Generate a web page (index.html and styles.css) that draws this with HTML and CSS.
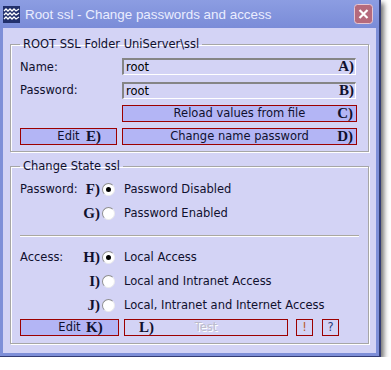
FILE: index.html
```html
<!DOCTYPE html>
<html lang="en">
<head>
  <meta charset="UTF-8" />
  <title>Root ssl - Change passwords and access</title>
  <link rel="stylesheet" href="styles.css">
</head>
<body>
  <div class="window">
    <div class="titlebar">
      <svg class="app-icon" width="17" height="17" viewBox="0 0 17 17">
        <rect x="0" y="0" width="17" height="17" fill="#22306c"/>
        <polyline points="1,5 3,3 5,5 7,3 9,5 11,3 13,5 16,3" fill="none" stroke="#fff" stroke-width="1.3"/>
        <polyline points="1,9 3,7 5,9 7,7 9,9 11,7 13,9 16,7" fill="none" stroke="#fff" stroke-width="1.3"/>
        <polyline points="1,13 3,11 5,13 7,11 9,13 11,11 13,13 16,11" fill="none" stroke="#fff" stroke-width="1.3"/>
      </svg>
      <span class="title">Root ssl - Change passwords and access</span>
      <span class="close">
        <svg width="19" height="20" viewBox="0 0 19 20">
          <rect x="0.5" y="0.5" width="18" height="19" rx="3" fill="#b56a7c" stroke="#e6c6d2"/>
          <path d="M5.5 6 L13.5 14 M13.5 6 L5.5 14" stroke="#fff" stroke-width="2.2"/>
        </svg>
      </span>
    </div>
    <div class="client">
      <fieldset class="group folder">
        <legend>ROOT SSL Folder UniServer\ssl</legend>
        <div class="form-grid">
          <label>Name:</label>
          <div class="field"><input type="text" value="root"><span class="tag tag-r">A)</span></div>
          <label>Password:</label>
          <div class="field"><input type="text" value="root"><span class="tag tag-r">B)</span></div>
          <span></span>
          <button class="btn">Reload values from file<span class="tag tag-r">C)</span></button>
          <button class="btn">Edit<span class="tag tag-edit">E)</span></button>
          <button class="btn">Change name password<span class="tag tag-r">D)</span></button>
        </div>
      </fieldset>

      <fieldset class="group state">
        <legend>Change State ssl</legend>
        <div class="opt-row">
          <span class="lbl">Password:</span><span class="key">F)</span><span class="radio on"></span><span class="opt">Password Disabled</span>
        </div>
        <div class="opt-row">
          <span class="lbl"></span><span class="key">G)</span><span class="radio"></span><span class="opt">Password Enabled</span>
        </div>
        <div class="sep"></div>
        <div class="opt-row">
          <span class="lbl">Access:</span><span class="key">H)</span><span class="radio on"></span><span class="opt">Local Access</span>
        </div>
        <div class="opt-row">
          <span class="lbl"></span><span class="key">I)</span><span class="radio"></span><span class="opt">Local and Intranet Access</span>
        </div>
        <div class="opt-row">
          <span class="lbl"></span><span class="key">J)</span><span class="radio"></span><span class="opt">Local, Intranet and Internet Access</span>
        </div>
        <div class="actions">
          <button class="btn btn-edit">Edit<span class="tag tag-edit">K)</span></button>
          <button class="btn btn-test" disabled>Test<span class="tag tag-test">L)</span></button>
          <button class="btn btn-small bang">!</button>
          <button class="btn btn-small help">?</button>
        </div>
      </fieldset>
    </div>
  </div>
</body>
</html>
```

FILE: styles.css
```css
:root {
  --client-bg: #d3d3f5;
  --btn-bg: #b3b5f5;
  --btn-border: #9c0000;
  --text: #10102e;
}
body {
  margin: 0;
  background: #fff;
  font-family: "DejaVu Sans", Verdana, sans-serif;
  font-size: 11.5px;
  color: var(--text);
}
/* window frame */
.window {
  width: 381px;
  background: #7e8fd8;
  border-right: 2px solid #333c74;
  border-bottom: 1px solid #333c74;
  box-sizing: border-box;
  box-shadow: 3px 3px 5px rgba(0,0,0,0.55);
}
.titlebar {
  height: 28px;
  display: flex;
  align-items: center;
  background: linear-gradient(#8c9de2, #7a8cd8);
}
.app-icon { margin-left: 3px; flex: none; }
.title {
  margin-left: 5px;
  font-family: "Liberation Sans", Arial, sans-serif;
  font-size: 13.4px;
  color: #eaedff;
  flex: 1;
}
.close { margin-right: 6px; display: flex; }
.client {
  margin: 0 3px 3px 3px;
  background: var(--client-bg);
  padding: 9px 0 9px;
}
/* group boxes */
.group {
  margin: 0 7px;
  padding: 7px 9px 6px;
  border: 1px solid #a6a6a6;
  box-shadow: inset 1px 1px 0 #fff, 1px 1px 0 #fff;
  min-width: 0;
}
.group legend {
  padding: 0 3px;
  line-height: 14px;
}
.state { margin-top: 7px; padding-top: 4px; padding-bottom: 7px; }

.form-grid {
  display: grid;
  grid-template-columns: 97px 235px;
  column-gap: 5px;
  row-gap: 6px;
  align-items: center;
}
.form-grid .field:nth-of-type(2) { margin-top: 1px; }
.field { position: relative; height: 17px; }
.field input {
  width: 234px;
  height: 17px;
  box-sizing: border-box;
  margin: 0;
  padding: 0 0 0 2px;
  border-style: solid;
  border-width: 2px 1px 1px 2px;
  border-color: #858585 #fff #fff #858585;
  background: var(--client-bg);
  font-family: "DejaVu Sans", Verdana, sans-serif;
  font-size: 11.5px;
  color: #000;
  outline: none;
}
.btn {
  position: relative;
  height: 17px;
  margin: 0;
  padding: 0;
  border: 1px solid var(--btn-border);
  background: var(--btn-bg);
  font-family: "DejaVu Sans", Verdana, sans-serif;
  font-size: 11.5px;
  line-height: 15px;
  color: var(--text);
  text-align: center;
}
/* letter keys overlaid on controls */
.tag {
  position: absolute;
  top: -1px;
  font-family: "Liberation Serif", "Times New Roman", serif;
  font-weight: bold;
  font-size: 15px;
  line-height: 17px;
  color: #10102e;
  text-shadow: none;
}
.tag-r { right: 3px; }
.field .tag-r { top: 0; right: 3px; }
.tag-edit { left: 65px; }
.tag-test { left: 14px; }

.opt-row {
  display: flex;
  align-items: center;
  height: 24px;
}
.lbl { width: 62px; }
.key {
  width: 18px;
  text-align: right;
  font-family: "Liberation Serif", "Times New Roman", serif;
  font-weight: bold;
  font-size: 15px;
}
.radio {
  width: 13px;
  height: 13px;
  margin-left: 2px;
  box-sizing: border-box;
  border-radius: 50%;
  background: #fff;
  border: 1px solid;
  border-color: #8e8e8e #ececec #ececec #8e8e8e;
  position: relative;
}
.radio.on::after {
  content: "";
  position: absolute;
  left: 3px; top: 3px;
  width: 5px; height: 5px;
  border-radius: 50%;
  background: #000;
}
.opt { margin-left: 9px; }
.sep {
  height: 1px;
  margin: 10px 0 9px;
  background: #aaa8a0;
  box-shadow: 0 1px 0 #fff;
}
.actions {
  display: flex;
  margin-top: 2px;
}
.btn-edit { width: 99px; }
.btn-test {
  width: 164px;
  margin-left: 5px;
  background: transparent;
  color: #bcbccc;
  text-shadow: 1px 1px 0 #fff;
}
.btn-test .tag { text-shadow: none; }
.btn-small {
  width: 17px;
  background: transparent;
}
.bang { margin-left: 8px; color: #b85a2a; }
.help { margin-left: 9px; color: #2a3a7a; }
```
